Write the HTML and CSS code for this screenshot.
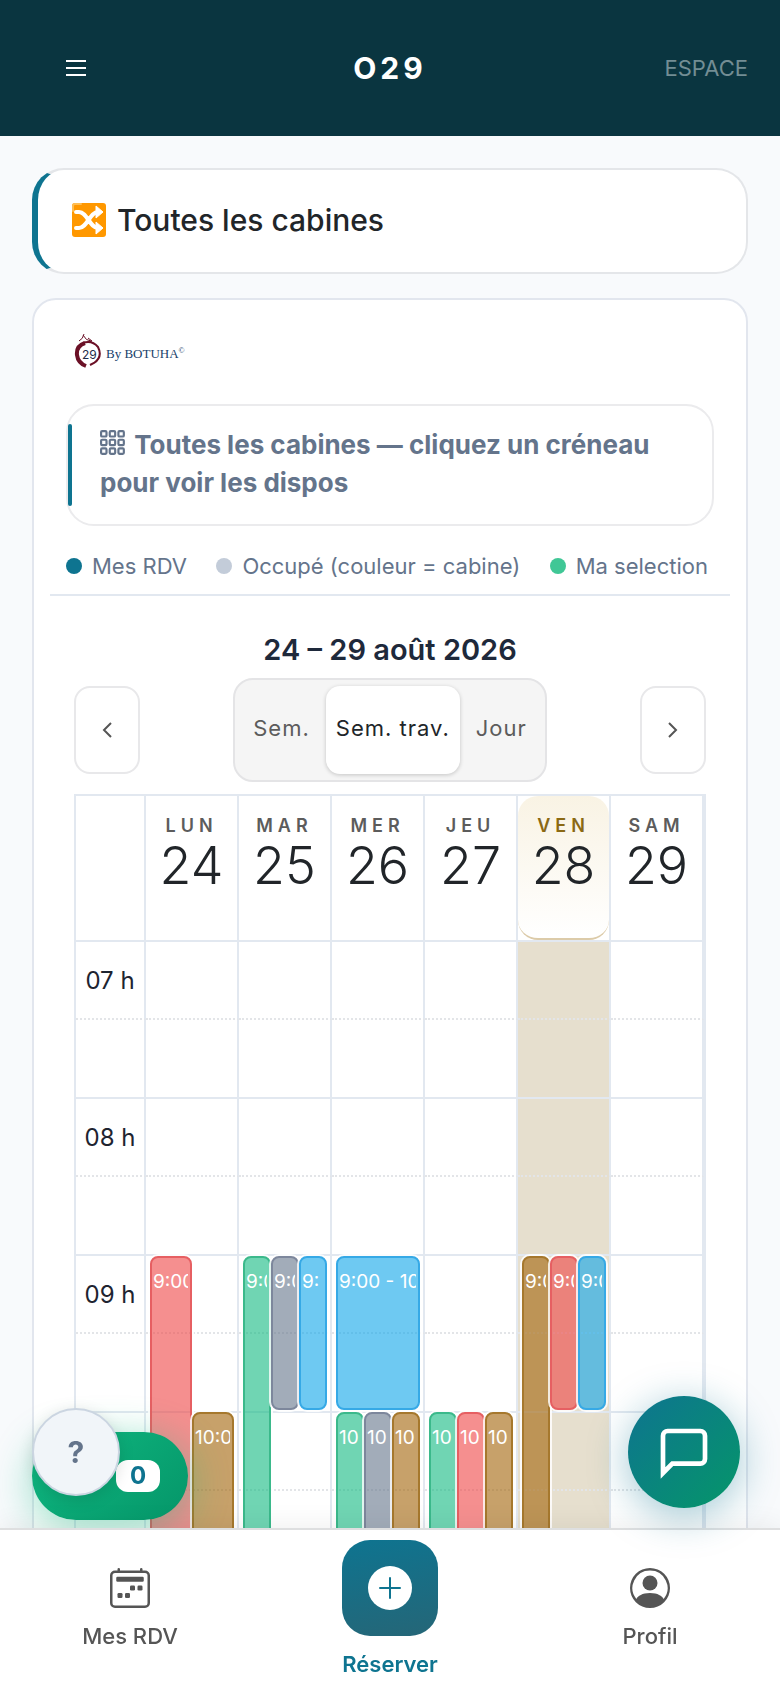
FILE: index.html
```html
<!DOCTYPE html>
<html lang="fr">
<head>
  <title>O29 - Réserver</title>
  <meta charset="utf-8">
  <meta name="viewport" content="width=device-width, initial-scale=1">
  <link rel="stylesheet" href="styles.css">
</head>

<body>
  <header class="topnav">
    <button class="menu" aria-label="Menu">
      <svg width="20" height="18" viewBox="0 0 20 18" stroke="#fff" stroke-width="2"><path d="M0 2h20M0 9h20M0 16h20"/></svg>
    </button>
    <h1>O29</h1>
    <a href="#espace" class="espace">ESPACE</a>
  </header>

  <main class="content">
    <button class="cabine">
      <svg width="36" height="36" viewBox="0 0 36 36" fill="none">
        <rect x="1" y="1" width="34" height="34" rx="3" fill="#ff9800"/>
        <path d="M2 9V4q0-2 2-2h6" stroke="#ffbd52" stroke-width="2" stroke-linecap="round"/>
        <path d="M5 10h3c8 0 11 16 19 16M5 26h3c8 0 11-16 19-16" stroke="#fff" stroke-width="4" stroke-linecap="round"/>
        <path d="M25 4l7 6-7 6zM25 20l7 6-7 6z" fill="#fff" stroke="#fff" stroke-linejoin="round"/>
      </svg>
      <span>Toutes les cabines</span>
    </button>

    <section class="card">
      <div class="logo">
        <svg width="28" height="36" viewBox="0 0 28 36" fill="none" stroke="#6b1026">
          <path d="M5 9q4-2 5-7M9 3q3 6 8 6M14 6l4 3-3 1" stroke-width="1"/>
          <path d="M9 11q9-3 15 4 5 10-4 16l-4 2" stroke-width="2"/>
          <path d="M11 11Q2 14 3 23q1 8 9 11" stroke-width="4"/>
          <text x="8" y="27" class="logo-num">29</text>
        </svg>
        <span>By BOTUHA<sup>©</sup></span>
      </div>

      <div class="info">
        <svg width="26" height="26" viewBox="0 0 24 24" fill="none" stroke="currentColor" stroke-width="2">
          <rect x="1" y="1" width="5" height="5" rx="1"/><rect x="9" y="1" width="5" height="5" rx="1"/><rect x="17" y="1" width="5" height="5" rx="1"/>
          <rect x="1" y="9" width="5" height="5" rx="1"/><rect x="9" y="9" width="5" height="5" rx="1"/><rect x="17" y="9" width="5" height="5" rx="1"/>
          <rect x="1" y="17" width="5" height="5" rx="1"/><rect x="9" y="17" width="5" height="5" rx="1"/><rect x="17" y="17" width="5" height="5" rx="1"/>
        </svg>
        <strong>Toutes les cabines</strong> — cliquez un créneau pour voir les dispos
      </div>

      <ul class="legend">
        <li class="mine">Mes RDV</li>
        <li class="busy">Occupé (couleur = cabine)</li>
        <li class="selected">Ma selection</li>
      </ul>

      <div class="calendar">
        <h2>24 – 29 août 2026</h2>
        <div class="toolbar">
          <button class="arrow" aria-label="Précédent">
            <svg width="16" height="20" viewBox="0 0 16 20"><path d="M12 3l-7 7 7 7"/></svg>
          </button>
          <div class="views">
            <button>Sem.</button>
            <button class="active">Sem. trav.</button>
            <button>Jour</button>
          </div>
          <button class="arrow" aria-label="Suivant">
            <svg width="16" height="20" viewBox="0 0 16 20"><path d="M4 3l7 7-7 7"/></svg>
          </button>
        </div>

        <table class="week">
          <thead>
            <tr>
              <td class="hours"></td>
              <th><div class="day"><span>LUN</span><b>24</b></div></th>
              <th><div class="day"><span>MAR</span><b>25</b></div></th>
              <th><div class="day"><span>MER</span><b>26</b></div></th>
              <th><div class="day"><span>JEU</span><b>27</b></div></th>
              <th><div class="day today"><span>VEN</span><b>28</b></div></th>
              <th><div class="day"><span>SAM</span><b>29</b></div></th>
            </tr>
          </thead>
          <tbody>
            <tr class="full"><th>07 h</th><td></td><td></td><td></td><td></td><td class="now"></td><td></td></tr>
            <tr class="half"><th></th><td></td><td></td><td></td><td></td><td class="now"></td><td></td></tr>
            <tr class="full"><th>08 h</th><td></td><td></td><td></td><td></td><td class="now"></td><td></td></tr>
            <tr class="half"><th></th><td></td><td></td><td></td><td></td><td class="now"></td><td></td></tr>
            <tr class="full">
              <th>09 h</th>
              <td>
                <div class="events two">
                  <a href="#rdv" class="red long"><span>9:00</span></a>
                  <a href="#rdv" class="brown later"><span>10:0</span></a>
                </div>
              </td>
              <td>
                <div class="events three">
                  <a href="#rdv" class="green long"><span>9:0</span></a>
                  <a href="#rdv" class="grey"><span>9:0</span></a>
                  <a href="#rdv" class="blue"><span>9:</span></a>
                </div>
              </td>
              <td>
                <div class="events three">
                  <a href="#rdv" class="blue wide"><span>9:00 - 10</span></a>
                  <a href="#rdv" class="green later"><span>10</span></a>
                  <a href="#rdv" class="grey later"><span>10</span></a>
                  <a href="#rdv" class="brown later"><span>10</span></a>
                </div>
              </td>
              <td>
                <div class="events three">
                  <a href="#rdv" class="green later"><span>10</span></a>
                  <a href="#rdv" class="red later"><span>10</span></a>
                  <a href="#rdv" class="brown later"><span>10</span></a>
                </div>
              </td>
              <td class="now">
                <div class="events three">
                  <a href="#rdv" class="brown long"><span>9:0</span></a>
                  <a href="#rdv" class="red"><span>9:0</span></a>
                  <a href="#rdv" class="blue"><span>9:0</span></a>
                </div>
              </td>
              <td></td>
            </tr>
            <tr class="half"><th></th><td></td><td></td><td></td><td></td><td class="now"></td><td></td></tr>
            <tr class="full"><th></th><td></td><td></td><td></td><td></td><td class="now"></td><td></td></tr>
            <tr class="half"><th></th><td></td><td></td><td></td><td></td><td class="now"></td><td></td></tr>
          </tbody>
        </table>
      </div>
    </section>
  </main>

  <nav class="bottomnav">
    <a href="#rdv">
      <svg width="40" height="40" viewBox="0 0 16 16" fill="currentColor">
        <path d="M3.500 0a.5.5 0 0 1 .5.5V1h8V.5a.5.5 0 0 1 1 0V1h1a2 2 0 0 1 2 2v11a2 2 0 0 1-2 2H2a2 2 0 0 1-2-2V3a2 2 0 0 1 2-2h1V.5a.5.5 0 0 1 .5-.5M2 2a1 1 0 0 0-1 1v11a1 1 0 0 0 1 1h12a1 1 0 0 0 1-1V3a1 1 0 0 0-1-1z"/>
        <rect x="2.500" y="3.500" width="11" height="2" rx=".5"/>
        <rect x="11" y="7" width="2" height="2" rx=".5"/><rect x="8" y="7" width="2" height="2" rx=".5"/>
        <rect x="3" y="10" width="2" height="2" rx=".5"/><rect x="6" y="10" width="2" height="2" rx=".5"/>
      </svg>
      <span>Mes RDV</span>
    </a>
    <a href="#reserver" class="current">
      <div class="plus">
        <svg width="44" height="44" viewBox="0 0 44 44">
          <circle cx="22" cy="22" r="22" fill="#fff"/>
          <path d="M12 22h20M22 12v20" stroke="#0e7490" stroke-width="2" stroke-linecap="round"/>
        </svg>
      </div>
      <span>Réserver</span>
    </a>
    <a href="#profil">
      <svg width="40" height="40" viewBox="0 0 16 16" fill="currentColor">
        <path d="M11 6a3 3 0 1 1-6 0 3 3 0 0 1 6 0"/>
        <path fill-rule="evenodd" d="M0 8a8 8 0 1 1 16 0A8 8 0 0 1 0 8m8-7a7 7 0 0 0-5.468 11.370C3.242 11.226 4.805 10 8 10s4.757 1.225 5.468 2.370A7 7 0 0 0 8 1"/>
      </svg>
      <span>Profil</span>
    </a>
  </nav>

  <button class="cart" aria-label="Ma sélection"><span>0</span></button>
  <button class="help" aria-label="Aide">?</button>
  <button class="chat" aria-label="Messages">
    <svg width="56" height="56" viewBox="0 0 24 24" fill="none" stroke="#fff" stroke-width="2"><path d="M21 15a2 2 0 0 1-2 2H7l-4 4V5a2 2 0 0 1 2-2h14a2 2 0 0 1 2 2z"/></svg>
  </button>
</body>
</html>
```

FILE: styles.css
```css
* {
  box-sizing: border-box;
}
html {
  font-family: Inter, "Liberation Sans", sans-serif;
  color: #212529;
}
body {
  margin: 0;
  height: 100vh;
  display: flex;
  flex-direction: column;
  background-color: #f8fafc;
}
button {
  font-family: inherit;
  color: inherit;
  cursor: pointer;
}
a {
  text-decoration: none;
}
svg {
  display: block;
}

/* top bar */
.topnav {
  display: grid;
  grid-template-columns: 1fr auto 1fr;
  align-items: center;
  flex: none;
  height: 136px;
  padding: 0 32px;
  background-color: #0a3540;
}
.topnav h1 {
  margin: 0;
  font-size: 30px;
  font-weight: 700;
  letter-spacing: 4px;
  color: #fff;
}
.menu {
  justify-self: start;
  padding: 34px;
  border: none;
  background: none;
}
.espace {
  justify-self: end;
  font-size: 22px;
  color: #738d94;
}

/* main column */
.content {
  flex: 1;
  min-height: 0;
  overflow-y: auto;
  scrollbar-width: none;
  padding: 32px 32px 0;
}
.cabine {
  display: flex;
  align-items: center;
  gap: 10px;
  width: 100%;
  height: 106px;
  margin-bottom: 24px;
  padding: 0 32px 3px 33px;
  border: 2px solid #e4e6e9;
  border-left: 6px solid #0e7490;
  border-radius: 32px;
  background-color: #fff;
  font-size: 30px;
  font-weight: 500;
}
.card {
  padding: 32px 16px;
  border: 2px solid #e2e6ee;
  border-radius: 24px;
  background-color: #fff;
}
.logo {
  display: flex;
  align-items: center;
  gap: 4px;
  height: 36px;
  margin: 0 24px 36px;
  font-family: "Liberation Serif", serif;
  font-size: 13px;
  color: #17406a;
}
.logo span {
  padding-top: 8px;
}
.logo sup {
  font-size: 8px;
  line-height: 0;
}
.logo-num {
  font-family: Inter, sans-serif;
  font-size: 12px;
  fill: #222c48;
  stroke: none;
}
.info {
  position: relative;
  margin: 0 16px;
  padding: 20px 32px 22px;
  border: 2px solid #ebebed;
  border-radius: 28px;
  font-size: 26px;
  font-weight: 700;
  line-height: 38px;
  color: #64748b;
}
.info::before {
  content: "";
  position: absolute;
  left: 0;
  top: 18px;
  bottom: 18px;
  width: 4px;
  border-radius: 2px;
  background-color: #0e7490;
}
.info svg {
  display: inline-block;
  margin-right: 2px;
  vertical-align: -2px;
}
.info strong {
  font-weight: 700;
}
.legend {
  display: flex;
  justify-content: space-between;
  margin: 0;
  padding: 24px 22px 12px 16px;
  list-style: none;
  border-bottom: 2px solid #e2e8f0;
  font-size: 22px;
  line-height: 32px;
  color: #64748b;
}
.legend li {
  display: flex;
  align-items: center;
  gap: 10px;
}
.legend li::before {
  content: "";
  width: 16px;
  height: 16px;
  border-radius: 50%;
}
.legend .mine::before { background-color: #0e7490; }
.legend .busy::before { background-color: #c3ccd9; }
.legend .selected::before { background-color: #40c796; }

/* calendar */
.calendar {
  padding: 36px 24px 0;
}
.calendar h2 {
  margin: 0 0 10px;
  font-size: 29px;
  font-weight: 600;
  line-height: 36px;
  text-align: center;
  color: #1e293b;
}
.toolbar {
  display: flex;
  align-items: center;
  justify-content: space-between;
  margin-bottom: 12px;
}
.arrow {
  display: flex;
  align-items: center;
  justify-content: center;
  width: 66px;
  height: 88px;
  padding: 0;
  border: 2px solid #e8e8ea;
  border-radius: 16px;
  background-color: #fff;
}
.arrow path {
  fill: none;
  stroke: #555;
  stroke-width: 2;
}
.views {
  display: flex;
  gap: 4px;
  padding: 6px;
  border: 2px solid #e4e4e6;
  border-radius: 20px;
  background-color: #f5f5f5;
}
.views button {
  height: 88px;
  padding: 0 12px 4px;
  border: none;
  border-radius: 14px;
  background: none;
  font-size: 22px;
  letter-spacing: 1px;
  color: #5c5c5c;
}
.views .active {
  padding: 0 10px 4px;
  background-color: #fff;
  color: #212529;
  box-shadow: 0 1px 4px rgba(0,0,0,.2);
}
.week {
  width: 100%;
  table-layout: fixed;
  border-collapse: separate;
  border-spacing: 0;
  border: 2px solid #e2e8f0;
  border-bottom: none;
}
.week th,
.week td {
  padding: 0;
  border-right: 2px solid #e2e8f0;
  border-bottom: 2px solid #e2e8f0;
}
.week .hours {
  width: 70px;
}
.week thead tr {
  height: 146px;
}
.day {
  display: flex;
  flex-direction: column;
  height: 144px;
  padding-top: 17px;
  text-align: center;
}
.day span {
  font-size: 18px;
  font-weight: 600;
  line-height: 26px;
  letter-spacing: 5px;
  color: #5c5c5c;
}
.day b {
  font-size: 52px;
  font-weight: 300;
  line-height: 54px;
}
.today {
  border-bottom: 2px solid #dccba9;
  border-radius: 20px;
  background: linear-gradient(#f9f3e4, #fff);
}
.today span {
  color: #8b6914;
}
.full {
  height: 78px;
}
.half {
  height: 79px;
}
.full > th,
.full > td {
  border-bottom-style: dotted;
  border-bottom-color: #e3e5e8;
}
.week tbody th {
  font-size: 24px;
  font-weight: 400;
  color: #1e2430;
}
.week tbody td {
  position: relative;
}
.now {
  background-color: #e6dfce;
}

/* appointments, one hour = two rows, laid over the slots */
.events {
  position: absolute;
  z-index: 1;
  top: 0;
  left: 4px;
  right: 3px;
  display: grid;
  grid-template-rows: 154px 156px;
  row-gap: 2px;
}
.two { grid-template-columns: repeat(2, 1fr); }
.three { grid-template-columns: repeat(3, 1fr); }
.events a {
  grid-row: 1;
  min-width: 0;
  padding: 11px 2px 0 1px;
  border: 2px solid;
  border-radius: 8px;
  box-shadow: 0 0 0 2px rgba(255,255,255,.85);
  font-size: 19px;
  line-height: 26px;
  white-space: nowrap;
}
.events span {
  display: block;
  overflow: hidden;
  color: #fff;
}
.events .long { grid-row: 1 / 3; }
.events .later { grid-row: 2; }
.events .wide { grid-column: 1 / 4; }
.events .red { border-color: #e65f62; background-color: rgba(239,68,68,.6); }
.events .green { border-color: #3bb98b; background-color: rgba(16,185,129,.6); }
.events .grey { border-color: #7d879c; background-color: rgba(100,116,139,.6); }
.events .blue { border-color: #36a9e6; background-color: rgba(14,165,233,.6); }
.events .brown { border-color: #a6782d; background-color: rgba(161,98,7,.6); }

/* bottom bar */
.bottomnav {
  position: relative;
  z-index: 2;
  display: grid;
  grid-template-columns: repeat(3, 1fr);
  flex: none;
  height: 160px;
  border-top: 2px solid #dedfe0;
  background-color: #fff;
  box-shadow: 0 -4px 24px rgba(0,0,0,.06);
}
.bottomnav a {
  display: flex;
  flex-direction: column;
  align-items: center;
  gap: 14px;
  padding-top: 38px;
  font-size: 22px;
  font-weight: 500;
  line-height: 28px;
  color: #555;
}
.bottomnav .current {
  padding-top: 10px;
  font-weight: 600;
  color: #0e7490;
}
.plus {
  display: flex;
  align-items: center;
  justify-content: center;
  width: 96px;
  height: 96px;
  border-radius: 28px;
  background: linear-gradient(170deg, #0e7490, #256677);
}

/* floating buttons */
.cart,
.help,
.chat {
  position: fixed;
  z-index: 3;
  display: flex;
  align-items: center;
  justify-content: center;
  padding: 0;
  border: none;
}
/* the cart's glow stays under the bottom bar */
.cart {
  z-index: 1;
  left: 32px;
  bottom: 168px;
  justify-content: flex-end;
  width: 156px;
  height: 88px;
  padding-right: 28px;
  border-radius: 44px;
  background: linear-gradient(135deg, #10b981, #059669);
  box-shadow: 0 8px 40px rgba(16,185,129,.45);
}
.cart span {
  width: 44px;
  height: 32px;
  border-radius: 12px;
  background-color: #fff;
  font-size: 24px;
  font-weight: 700;
  line-height: 32px;
  color: #0e7490;
}
.help {
  left: 32px;
  bottom: 192px;
  width: 88px;
  height: 88px;
  border: 2px solid #cbd5e1;
  border-radius: 50%;
  background-color: #f1f5f9;
  box-shadow: 0 4px 16px rgba(0,0,0,.12);
  font-size: 30px;
  font-weight: 700;
  color: #64748b;
}
.chat {
  right: 40px;
  bottom: 180px;
  width: 112px;
  height: 112px;
  border-radius: 50%;
  background: linear-gradient(135deg, #0e7490, #059669);
  box-shadow: 0 8px 40px rgba(14,116,144,.4);
}
```
